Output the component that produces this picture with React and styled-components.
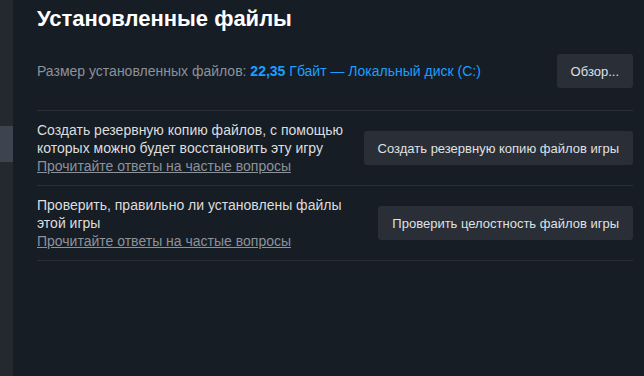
import styled, { createGlobalStyle } from "styled-components";

const GlobalStyle = createGlobalStyle`
  html, body {
    margin: 0;
    padding: 0;
    background: #171d25;
  }
  body {
    font-family: "Liberation Sans", Arial, sans-serif;
  }
`;

const Layout = styled.div`
  display: flex;
  width: 644px;
  height: 376px;
  overflow: hidden;
  background: #171d25;
`;

const Sidebar = styled.div`
  width: 13px;
  flex-shrink: 0;
  background: #25282e;
  display: flex;
  flex-direction: column;
`;

const SidebarItem = styled.div`
  height: 36px;
  margin-top: ${(p) => p.$offset || 0}px;
  background: ${(p) => (p.$active ? "#3d4450" : "transparent")};
`;

const Main = styled.div`
  flex: 1;
  padding: 6px 11px 0 24px;
  display: flex;
  flex-direction: column;
`;

const Title = styled.h1`
  margin: 0;
  font-size: 22px;
  line-height: 26px;
  font-weight: 700;
  color: #ffffff;
`;

const InfoRow = styled.div`
  display: flex;
  align-items: center;
  justify-content: space-between;
  padding: 22px 0 22px;
  border-bottom: 1px solid #2a2f37;
`;

const InfoText = styled.div`
  font-size: 14px;
  color: #8b929a;
`;

const Highlight = styled.span`
  color: #1a9fff;
  font-weight: ${(p) => (p.$bold ? 700 : 400)};
`;

const Button = styled.button`
  height: 34px;
  padding: 0 14px;
  border: none;
  border-radius: 3px;
  background: #2a2e36;
  color: #dfe1e3;
  font-family: inherit;
  font-size: 13px;
  white-space: nowrap;
  flex-shrink: 0;
  cursor: pointer;

  &:hover {
    background: #3d4450;
  }
`;

const ActionRow = styled.div`
  display: flex;
  align-items: center;
  justify-content: space-between;
  gap: 16px;
  padding: 10px 0 10px;
  border-bottom: 1px solid #2a2f37;
`;

const ActionText = styled.div`
  flex: 1;
  display: flex;
  flex-direction: column;
  font-size: 14px;
  line-height: 18px;
`;

const Description = styled.p`
  margin: 0;
  color: #dcdedf;
`;

const FaqLink = styled.a`
  color: #8b929a;
  text-decoration: underline;
  cursor: pointer;
  align-self: flex-start;
`;

const actions = [
  {
    id: "backup",
    text: "Создать резервную копию файлов, с помощью которых можно будет восстановить эту игру",
    button: "Создать резервную копию файлов игры",
  },
  {
    id: "verify",
    text: "Проверить, правильно ли установлены файлы этой игры",
    button: "Проверить целостность файлов игры",
  },
];

export default function App() {
  return (
    <>
      <GlobalStyle />
      <Layout>
        <Sidebar>
          <SidebarItem $offset={126} $active />
        </Sidebar>
        <Main>
          <Title>Установленные файлы</Title>
          <InfoRow>
            <InfoText>
              Размер установленных файлов: <Highlight $bold>22,35</Highlight>{" "}
              <Highlight>Гбайт — Локальный диск (C:)</Highlight>
            </InfoText>
            <Button>Обзор...</Button>
          </InfoRow>
          {actions.map((action) => (
            <ActionRow key={action.id}>
              <ActionText>
                <Description>{action.text}</Description>
                <FaqLink>Прочитайте ответы на частые вопросы</FaqLink>
              </ActionText>
              <Button>{action.button}</Button>
            </ActionRow>
          ))}
        </Main>
      </Layout>
    </>
  );
}
